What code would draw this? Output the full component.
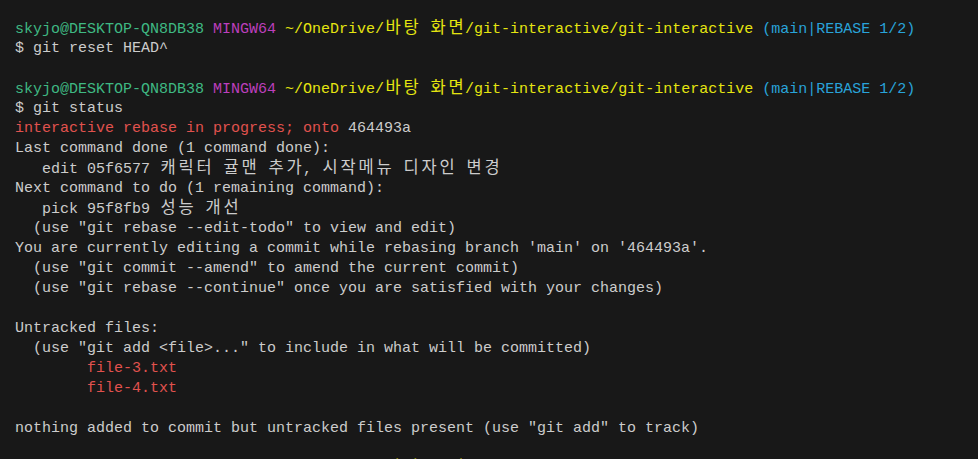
import React from "react";

type Seg = { t: string; c?: string };

const GREEN = "text-[#3fb983]";
const MAGENTA = "text-[#bc3fbc]";
const YELLOW = "text-[#e5e510]";
const CYAN = "text-[#29a3d9]";
const RED = "text-[#e0524e]";

// terminal cells: hangul takes two columns
const Cells: React.FC<{ text: string }> = ({ text }) => {
  const parts: React.ReactNode[] = [];
  let buf = "";
  Array.from(text).forEach((ch, i) => {
    if (/[\uac00-\ud7a3]/.test(ch)) {
      if (buf) parts.push(buf);
      buf = "";
      parts.push(
        <span
          key={i}
          className="inline-block w-[18px] text-center text-[16.5px] leading-[20px]"
        >
          {ch}
        </span>,
      );
    } else {
      buf += ch;
    }
  });
  if (buf) parts.push(buf);
  return <>{parts}</>;
};

const Line: React.FC<{ segs?: Seg[] }> = ({ segs = [] }) => (
  <div className="h-[20px] whitespace-pre leading-[20px]">
    {segs.map((s, i) => (
      <span key={i} className={s.c}>
        <Cells text={s.t} />
      </span>
    ))}
  </div>
);

const prompt: Seg[] = [
  { t: "skyjo@DESKTOP-QN8DB38 ", c: GREEN },
  { t: "MINGW64 ", c: MAGENTA },
  { t: "~/OneDrive/바탕 화면/git-interactive/git-interactive", c: YELLOW },
  { t: " (main|REBASE 1/2)", c: CYAN },
];

const lines: Seg[][] = [
  prompt,
  [{ t: "$ git reset HEAD^" }],
  [],
  prompt,
  [{ t: "$ git status" }],
  [{ t: "interactive rebase in progress; onto ", c: RED }, { t: "464493a" }],
  [{ t: "Last command done (1 command done):" }],
  [{ t: "   edit 05f6577 캐릭터 귤맨 추가, 시작메뉴 디자인 변경" }],
  [{ t: "Next command to do (1 remaining command):" }],
  [{ t: "   pick 95f8fb9 성능 개선" }],
  [{ t: '  (use "git rebase --edit-todo" to view and edit)' }],
  [{ t: "You are currently editing a commit while rebasing branch 'main' on '464493a'." }],
  [{ t: '  (use "git commit --amend" to amend the current commit)' }],
  [{ t: '  (use "git rebase --continue" once you are satisfied with your changes)' }],
  [],
  [{ t: "Untracked files:" }],
  [{ t: '  (use "git add <file>..." to include in what will be committed)' }],
  [{ t: "        file-3.txt", c: RED }],
  [{ t: "        file-4.txt", c: RED }],
  [],
  [{ t: 'nothing added to commit but untracked files present (use "git add" to track)' }],
  [],
  prompt,
];

export default function App() {
  return (
    <div className="h-[459px] w-[978px] overflow-hidden bg-[#181818] pl-[15px] pt-[19px] font-['Liberation_Mono','Noto_Sans_CJK_KR',monospace] text-[15px] text-[#cccccc]">
      {lines.map((l, i) => (
        <Line key={i} segs={l} />
      ))}
    </div>
  );
}
